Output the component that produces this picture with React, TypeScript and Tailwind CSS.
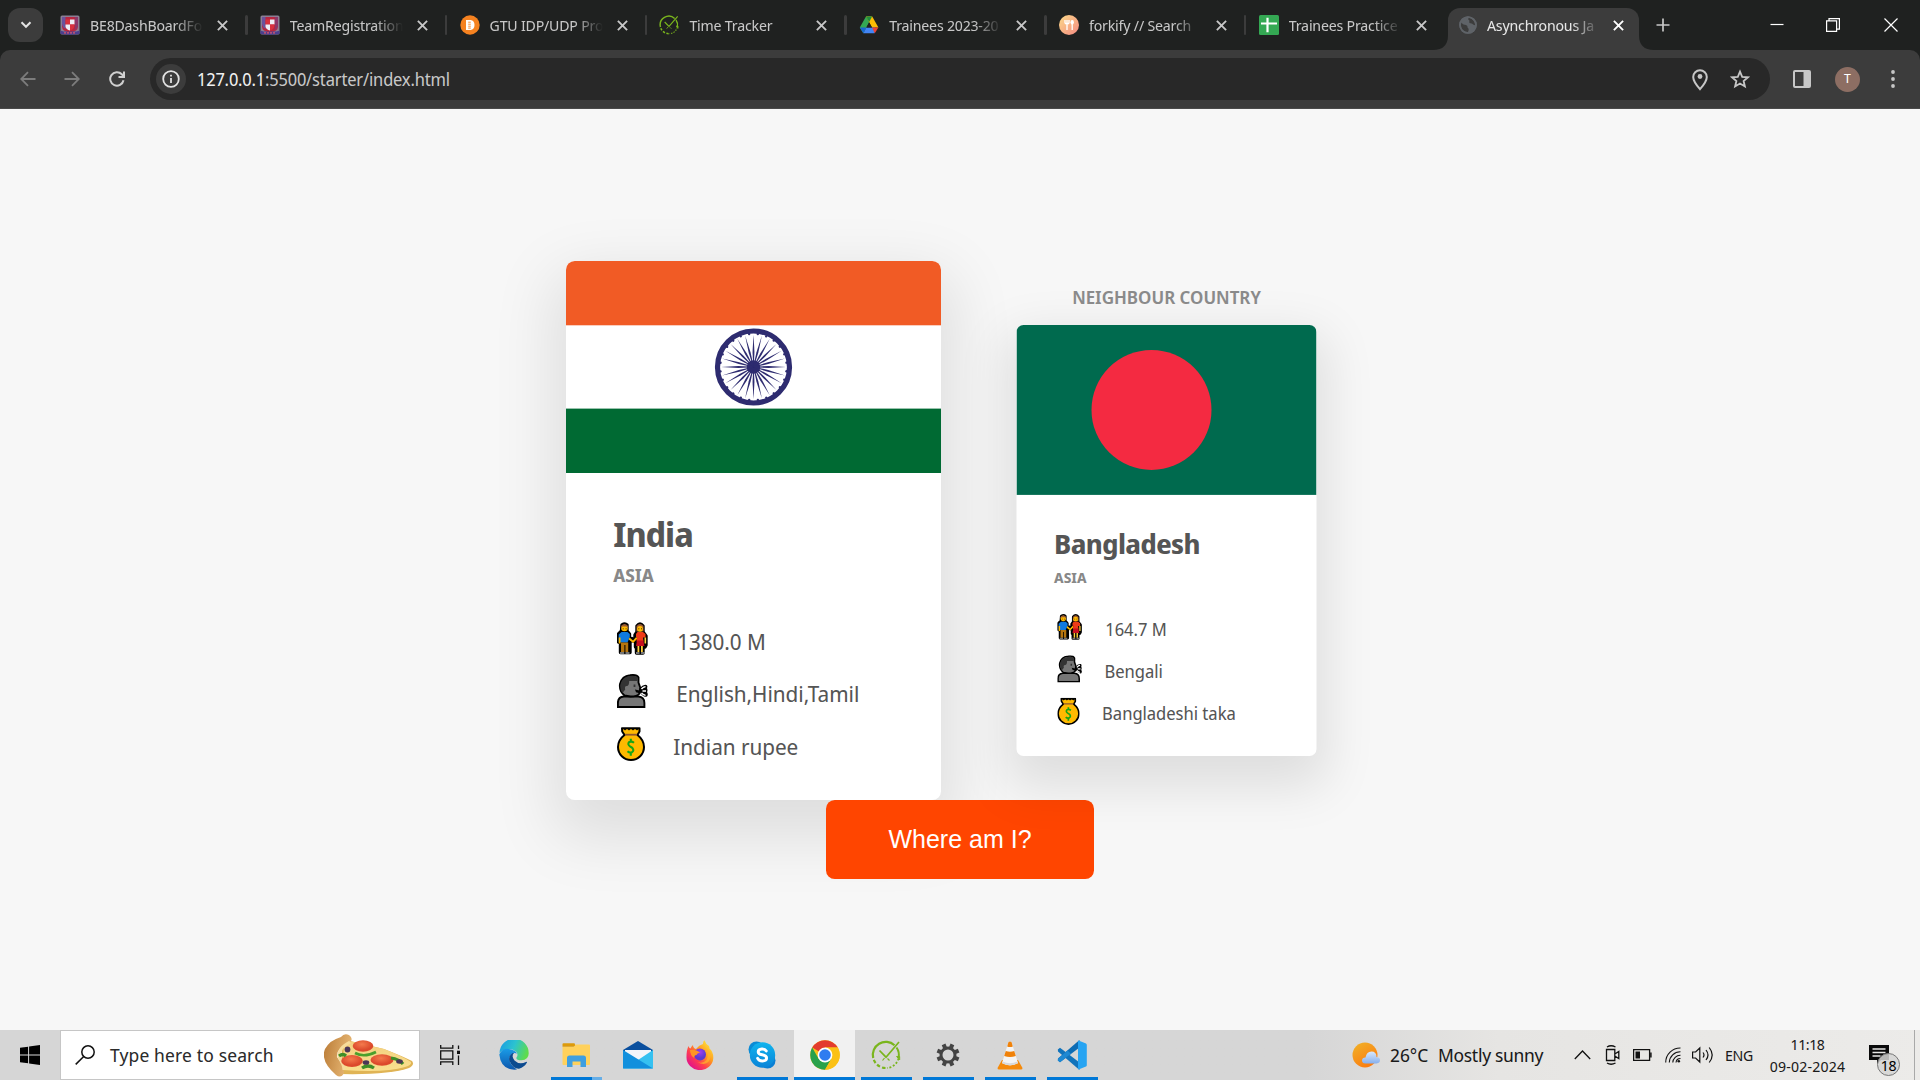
import type { ReactNode } from "react";

/* ---------- Favicons ---------- */

function CrestIcon() {
  return (
    <svg viewBox="0 0 20 20" className="size-5 shrink-0">
      <rect x="0.5" y="0.5" width="19" height="19" rx="1.5" fill="#8b7f93" />
      <path d="M2 2h16v9.500q0 4.500-8 6.500q-8-2-8-6.500z" fill="#b8263f" />
      <path d="M2 2h3.500v12l-2-1.500q-1.500-2-1.500-4z" fill="#5a5cae" opacity="0.85" />
      <path d="M14.800 2H18v9l-1.500 3l-1.700 1z" fill="#7e3c74" opacity="0.8" />
      <path d="M5.500 4.500h4.500v5h-4.500z" fill="#d8323f" />
      <path d="M10 4.500h4.500v5h-4.500z" fill="#eef0f6" />
      <path d="M5.500 9.500h4.500v6q-4-1-4.500-4z" fill="#eef0f6" />
      <path d="M10 9.500h4.500q0 5-4.500 6z" fill="#d8323f" />
      <path d="M0.500 15.500l3 1h13l3-1v3.500q-9.500 1.500-19 0z" fill="#4a3f8f" />
      <path d="M4 17.800h12" stroke="#d9566b" strokeWidth="1.200" strokeDasharray="2 1" />
    </svg>
  );
}

function GtuIcon() {
  return (
    <svg viewBox="0 0 20 20" className="size-5 shrink-0">
      <circle cx="10" cy="10" r="9.700" fill="#f58220" />
      <path d="M6 5h4.500q4 0.500 4 5t-4 5h-4.500z" fill="#fff" />
      <path d="M8.200 7.200h2.600M8.200 9.200h2.600M8.200 11.200h2.600M8.200 13.100h2.600" stroke="#f58220" strokeWidth="0.900" />
    </svg>
  );
}

function TrackerIcon({ className }: { className: string }) {
  return (
    <svg viewBox="0 0 30 30" className={className} fill="none" stroke="#7ab51d">
      <path d="M2.200 18A13 13 0 0 1 23.500 5.200" strokeWidth="2.200" />
      <path d="M25.500 7.500A13 13 0 0 1 27.500 18" strokeWidth="2" />
      <path d="M8.500 10.500L15 17.200L28 2" strokeWidth="1.700" />
      <path d="M16.500 18.500l2 2M13.500 18l-2 2.500" strokeWidth="1.200" />
      <path d="M27.500 18.500A13 13 0 0 1 16 28" strokeWidth="1.700" strokeDasharray="2 1.800" />
      <path d="M14.500 28A13 13 0 0 1 2.500 19" strokeWidth="2.200" strokeDasharray="3.500 2.200" />
      <path d="M25.500 16.500h3.200v3.500z" fill="#7ab51d" strokeWidth="0.800" />
    </svg>
  );
}

function DriveIcon() {
  return (
    <svg viewBox="0 0 20 20" className="size-5 shrink-0">
      <path d="M7 1.500L0.800 12.500L4.300 18.200L10.300 7.200z" fill="#34a853" />
      <path d="M7 1.500h6l-2.700 5.900z" fill="#188038" />
      <path d="M7 1.500h6.200L19.400 12.500h-6.400z" fill="#fbbc04" />
      <path d="M7 1.500h3.100l3 0l-2.900 5.600z" fill="#1e8e3e" />
      <path d="M4.300 18.200L7.300 12.500h8.800l-0.500 5.700z" fill="#4285f4" />
      <path d="M0.800 12.500h6.500l-3 5.700z" fill="#1967d2" />
      <path d="M13 12.500h6.400l-3.600 5.700z" fill="#ea4335" />
      <path d="M10.100 7.200L7.300 12.500h5.700z" fill="#1f2120" />
    </svg>
  );
}

function ForkifyIcon() {
  return (
    <svg viewBox="0 0 20 20" className="size-5 shrink-0">
      <defs>
        <linearGradient id="forkify" x1="0" y1="0" x2="1" y2="1">
          <stop offset="0" stopColor="#fbdb89" />
          <stop offset="1" stopColor="#f48982" />
        </linearGradient>
      </defs>
      <circle cx="10" cy="10" r="10" fill="url(#forkify)" />
      <path d="M6 5v3.500M8 5v3.500M10 5v3.500M6 8.500h4M8 9v6" stroke="#fff" strokeWidth="1.300" fill="none" />
      <ellipse cx="13.200" cy="7.200" rx="1.700" ry="2.300" fill="#fff" />
      <path d="M13.200 8v7" stroke="#fff" strokeWidth="1.300" />
    </svg>
  );
}

function SheetsIcon() {
  return (
    <svg viewBox="0 0 20 20" className="size-5 shrink-0">
      <rect width="20" height="20" rx="1.500" fill="#34a853" />
      <path d="M8.500 2.800v14.400M2 8.500h16" stroke="#fff" strokeWidth="2.200" />
    </svg>
  );
}

function GlobeIcon() {
  return (
    <svg viewBox="0 0 18 18" className="size-[18px] shrink-0">
      <circle cx="9" cy="9" r="8.800" fill="#5f6368" />
      <path d="M2 6.500q2.500 2.500 5 2.500q2 0.500 1.500 2.500q2 1 0.500 4.500q-6 0-7-6z" fill="#3c3c3c" />
      <path d="M9.500 1.800q-1 2 1 3q-1 1.500 0.500 2.500q2-0.500 3.500 1.500l1.500 0.500q0-6-6.500-7.500z" fill="#3c3c3c" />
      <circle cx="9" cy="9" r="8" fill="none" stroke="#5f6368" strokeWidth="1.600" />
    </svg>
  );
}

/* ---------- Browser chrome ---------- */

function CloseGlyph({ className }: { className: string }) {
  return (
    <svg viewBox="0 0 10 10" className={className} fill="none" stroke="currentColor" strokeWidth="1.700">
      <path d="M0.800 0.800l8.400 8.400M9.200 0.800L0.800 9.200" />
    </svg>
  );
}

const tabs: { title: string; icon: ReactNode }[] = [
  { title: "BE8DashBoardFo", icon: <CrestIcon /> },
  { title: "TeamRegistration", icon: <CrestIcon /> },
  { title: "GTU IDP/UDP Pro", icon: <GtuIcon /> },
  { title: "Time Tracker", icon: <TrackerIcon className="size-5 shrink-0" /> },
  { title: "Trainees 2023-20", icon: <DriveIcon /> },
  { title: "forkify // Search", icon: <ForkifyIcon /> },
  { title: "Trainees Practice", icon: <SheetsIcon /> },
];

const tabTitle =
  "ml-2.5 w-[113px] shrink-0 whitespace-nowrap text-[15px] leading-5 tracking-[-0.2px] [mask-image:linear-gradient(to_right,black_75%,transparent)]";

function TabStrip() {
  return (
    <div className="flex h-[50px] bg-[#1f2120] text-[#c7c7c7]">
      <div className="mt-2 ml-2 flex h-[34px] w-[35px] items-center justify-center rounded-xl bg-[#3c3c3c]">
        <svg viewBox="0 0 12 8" className="h-2 w-3" fill="none" stroke="#e3e3e3" strokeWidth="2">
          <path d="M1.500 1.200L6 5.800L10.500 1.200" />
        </svg>
      </div>
      <div className="ml-[7px] flex">
        {tabs.map((tab, i) => (
          <div key={i} className="flex w-[199.800px] items-center pl-2.5">
            {tab.icon}
            <span className={tabTitle}>{tab.title}</span>
            <CloseGlyph className="ml-3.5 size-[11px] shrink-0" />
            {i < tabs.length - 1 && <span className="ml-[17px] h-5 w-[2.500px] rounded bg-[#3c3c3c]" />}
          </div>
        ))}
        <div className="relative -ml-[0.600px] mt-2 flex h-[42px] w-[191px] items-center rounded-t-xl bg-[#3c3c3c] pb-2 pl-[11px] text-[#e6e6e6]">
          <svg viewBox="0 0 15 15" className="absolute bottom-0 -left-[15px] size-[15px]">
            <path d="M15 0v15H0Q15 15 15 0z" fill="#3c3c3c" />
          </svg>
          <svg viewBox="0 0 15 15" className="absolute -right-[15px] bottom-0 size-[15px]">
            <path d="M0 0v15h15Q0 15 0 0z" fill="#3c3c3c" />
          </svg>
          <GlobeIcon />
          <span className={tabTitle}>Asynchronous Ja</span>
          <CloseGlyph className="ml-[13px] size-[11px] shrink-0 text-white" />
        </div>
      </div>
      <svg viewBox="0 0 14 14" className="mt-[18px] ml-[17px] size-3.5" stroke="#c7c7c7" strokeWidth="1.700">
        <path d="M7 0.500v13M0.500 7h13" />
      </svg>
      <div className="ml-auto flex h-[50px] items-center pr-[22px]">
        <svg viewBox="0 0 14 14" className="size-3.5" stroke="#fff" strokeWidth="1.200">
          <path d="M0.500 6.500h13" />
        </svg>
        <svg viewBox="0 0 14 14" className="ml-[42px] size-3.5" fill="none" stroke="#fff" strokeWidth="1.200">
          <path d="M0.600 2.900h10v10.500h-10zM3 2.900V0.600h10.400v10.500h-2.500" />
        </svg>
        <svg viewBox="0 0 14 14" className="ml-[44px] size-3.5" stroke="#fff" strokeWidth="1.200">
          <path d="M0.500 0.500l13 13M13.500 0.500l-13 13" />
        </svg>
      </div>
    </div>
  );
}

function Toolbar() {
  return (
    <div className="bg-[#1f2120]">
      <div className="flex h-[59px] items-center rounded-t-[10px] border-b border-[#4a4a4a] bg-[#3c3c3c] pl-5">
        <svg viewBox="0 0 16 16" className="size-4" fill="none" stroke="#7c7c7c" strokeWidth="1.800">
          <path d="M15.500 8H1.500M8 1.200L1.200 8L8 14.800" />
        </svg>
        <svg viewBox="0 0 16 16" className="ml-[28px] size-4" fill="none" stroke="#7c7c7c" strokeWidth="1.800">
          <path d="M0.500 8h14M8 1.200L14.800 8L8 14.800" />
        </svg>
        <svg viewBox="0 0 16 16" className="ml-[29px] size-4" fill="none" stroke="#d0d0d0" strokeWidth="2">
          <path d="M14.500 9.200A6.700 6.700 0 1 1 12.800 3.300L14.500 5.200" />
          <path d="M15 0.500v5.500h-5.500" />
        </svg>
        <div className="ml-[25px] flex h-[42px] w-[1620px] items-center rounded-full bg-[#282828] pl-[6px]">
          <div className="flex size-[30px] items-center justify-center rounded-full bg-[#3c3c3c]">
            <svg viewBox="0 0 18 18" className="size-[18px]" fill="none" stroke="#e3e3e3" strokeWidth="1.800">
              <circle cx="9" cy="9" r="7.800" />
              <path d="M9 8v5M9 4.700v1.800" />
            </svg>
          </div>
          <span className="ml-[11px] text-[17.500px] leading-6 tracking-[-0.190px] text-[#c7c7c7]">
            <span className="text-[#f0f0f0]">127.0.0.1</span>:5500/starter/index.html
          </span>
          <svg viewBox="0 0 16 22" className="mt-0.5 ml-auto h-[22px] w-4" fill="none" stroke="#c7c7c7" strokeWidth="2">
            <path d="M8 20.200Q1.200 12.500 1.200 8A6.800 6.800 0 0 1 14.800 8Q14.800 12.500 8 20.200z" />
            <circle cx="8" cy="7.500" r="2.400" fill="#c7c7c7" stroke="none" />
          </svg>
          <svg viewBox="0 0 20 20" className="mr-5 ml-[22px] size-5" fill="none" stroke="#c7c7c7" strokeWidth="1.800">
            <path d="M10 2.600l2.200 5.200l5.700 0.500l-4.300 3.700l1.300 5.500L10 14.600l-4.900 2.900l1.300-5.500L2.100 8.300l5.700-0.500z" />
          </svg>
        </div>
        <svg viewBox="0 0 18 18" className="ml-[23px] size-[18px]">
          <rect x="1" y="1" width="16" height="16" rx="1" fill="none" stroke="#c7c7c7" strokeWidth="2" />
          <path d="M10.500 1H17v16h-6.500z" fill="#c7c7c7" />
        </svg>
        <div className="ml-[24px] flex size-[25px] items-center justify-center rounded-full bg-[#8d6e63] text-[13px] text-white">
          T
        </div>
        <svg viewBox="0 0 4 18" className="ml-[31px] h-[18px] w-1" fill="#c7c7c7">
          <circle cx="2" cy="2" r="1.900" />
          <circle cx="2" cy="9" r="1.900" />
          <circle cx="2" cy="16" r="1.900" />
        </svg>
      </div>
    </div>
  );
}

/* ---------- Flags ---------- */

const spokes = Array.from({ length: 24 }, (_, i) => i * 15);

function IndiaFlag() {
  return (
    <svg viewBox="0 0 375 212" className="block h-[212px] w-[375px]">
      <rect width="375" height="212" fill="#fff" />
      <rect width="375" height="64.300" fill="#f15b25" />
      <rect y="147.600" width="375" height="64.400" fill="#006a33" />
      <g transform="translate(187.500 106)" fill="#2e2c70">
        <circle r="36" fill="none" stroke="#2e2c70" strokeWidth="5.200" />
        <circle r="6.800" />
        {spokes.map((angle) => (
          <g key={angle} transform={`rotate(${angle})`}>
            <path d="M-0.250 0L-0.950 -15L0 -32.500L0.950 -15L0.250 0z" />
            <circle cx="4.300" cy="-33" r="1.200" />
          </g>
        ))}
      </g>
    </svg>
  );
}

function BangladeshFlag() {
  return (
    <svg viewBox="0 0 375 212.500" className="block h-[212.500px] w-[375px]">
      <rect width="375" height="212.500" fill="#006a4e" />
      <circle cx="168.750" cy="106.250" r="75" fill="#f42a41" />
    </svg>
  );
}

/* ---------- Country row pictograms ---------- */

function CoupleIcon() {
  return (
    <svg viewBox="0 0 31 34" className="h-[34px] w-[31px] shrink-0">
      <path
        d="M5 3q3-2 5 0v6l2.500 3v7l2.500-2.500L18 19v-6l2-3V4q3-4 6 0v6l3 4v9l-1 2h-2v6h-6.500v-6h-1v-5l-3-1.500l-2.500 1v11H3.500V21l-2-1v-8l3-3z"
        stroke="#000"
        strokeWidth="3.400"
        strokeLinejoin="round"
        fill="#000"
      />
      <path d="M4.500 10h6l2.300 2v3l-2.300 5.500h-6l-2.800-0.500v-7.500z" fill="#0f7ae0" />
      <path d="M1.700 15.500h1.800v6h-1.800zM12.500 15.500l3.500 3l3.200-3.500l1.300 1.500l-4.300 4.500l-4.500-3.500z" fill="#ffb900" />
      <path d="M4 20.500h7.200v9.500H8.400v-7h-1v7H4z" fill="#b5750f" />
      <path d="M3 30h4.200v2H3zM8.500 30h4v2h-4z" fill="#767676" />
      <circle cx="7.500" cy="6" r="3.300" fill="#ffb900" />
      <path d="M4 6V4Q7.500-0.200 11 4v2l-1.500-1.500h-4z" fill="#9a5a32" />
      <path d="M5.700 6.800h1M8.600 6.800h1" stroke="#000" strokeWidth="0.700" />
      <path d="M19.500 8V4q3.500-4 7 0v5.500h-7z" fill="#9a5a32" />
      <circle cx="23" cy="6.800" r="2.900" fill="#ffb900" />
      <path d="M21.300 6.800h1M24 6.800h1" stroke="#000" strokeWidth="0.700" />
      <path d="M20.500 10h5.500l2.500 2v3.500h-2.500l0.500 4h-7l0.500-4.500h-1v-3z" fill="#f03a17" />
      <path d="M20 18.500h6.300l1.200 5.500h-8.500z" fill="#c50f1f" />
      <path d="M27.500 15.500h1.600v6h-1.600zM20.500 24h1.800v6h-1.800zM24 24h1.800v6H24z" fill="#ffd03a" />
      <path d="M19 30h3.500v2H19zM24 30h4v2h-4z" fill="#767676" />
    </svg>
  );
}

function SpeakingIcon() {
  return (
    <svg viewBox="0 0 31 34" className="h-[34px] w-[31px] shrink-0">
      <path d="M0.900 33V29q0-6 6-6.500h14.500q6 0.500 6 6.500v4z" fill="#767676" stroke="#000" strokeWidth="1.900" />
      <path d="M7.500 21.500Q2 17 3 10Q5 2 13 1.200q7-1 8.500 2.300v5l1.700 5l-0.700 6q-2 3-9 3z" fill="#767676" stroke="#000" strokeWidth="1.900" />
      <path d="M5.500 19Q2.500 15 3.500 10Q5.500 3 12.500 2q6.500-0.800 8.200 1.500v3.500h-8.500q0 5-2.500 5t-1.500 3.500z" fill="#333" />
      <path d="M17.500 10.500v2.500" stroke="#333" strokeWidth="1.800" />
      <path d="M18 15.500l5.500 1.200l-1 2.500l-3.500-1z" fill="#000" />
      <path d="M22.500 14.500Q26 10 29.500 11q1.500 1 0.500 3q1 2.500 0 4q1.500 2.500 0 4.500q-4 1-7-4z" fill="#000" />
      <path d="M24.500 15q2-2.500 4-2.300M25.500 17h3.500M24.500 19q2 2.300 4 2.200" stroke="#fff" strokeWidth="1.500" fill="none" />
    </svg>
  );
}

function MoneyIcon() {
  return (
    <svg viewBox="0 0 28 34" className="h-[34px] w-7 shrink-0">
      <path
        d="M5 1.200h17.500v3.300l-2 3.500q6.500 5 6.500 12A12.700 12.700 0 1 1 1 20Q1 13 7.500 8L5.200 4.500z"
        fill="#ffb900"
        stroke="#000"
        strokeWidth="2"
        strokeLinejoin="round"
      />
      <path d="M8 7.700h12" stroke="#8e562e" strokeWidth="1.800" />
      <path d="M6 1.500l2 2l2-2l2 2l2-2l2 2l2-2l2 2l1.800-2z" fill="#000" />
      <path
        d="M17 15.800Q14.500 13.700 12 15.200Q10.300 17.500 13 19.300L15.300 20.800Q17.500 23.500 15 25.200Q12.500 26.200 10.500 24.300M13.800 11.800v3M13.800 25.500v3.200"
        stroke="#16a516"
        strokeWidth="2.100"
        fill="none"
      />
    </svg>
  );
}

/* ---------- Country card ---------- */

type Country = {
  flag: ReactNode;
  name: string;
  region: string;
  population: string;
  languages: string;
  currency: string;
};

function CountryRow({ icon, children }: { icon: ReactNode; children: ReactNode }) {
  return (
    <div className="flex h-[52.500px] items-center">
      <div className="-mt-[4px]">{icon}</div>
      <span className="whitespace-nowrap text-[22px] leading-8 tracking-[-0.050px]">{children}</span>
    </div>
  );
}

function CountryCard({ country, neighbour = false }: { country: Country; neighbour?: boolean }) {
  return (
    <article
      className={
        neighbour
          ? "relative ml-[37.500px] w-[375px] translate-y-[10px] scale-80 rounded-[8.750px] bg-white shadow-[0_25px_62.500px_12.500px_rgba(0,0,0,0.1)]"
          : "w-[375px] rounded-[8.750px] bg-white shadow-[0_25px_62.500px_12.500px_rgba(0,0,0,0.1)]"
      }
    >
      {neighbour && (
        <h2 className="absolute -top-[49px] w-full text-center text-[22.500px] leading-[30px] font-semibold text-[#8a8a8a]">
          NEIGHBOUR COUNTRY
        </h2>
      )}
      <div className="overflow-hidden rounded-t-[8.750px]">{country.flag}</div>
      <div className={neighbour ? "h-[326.500px] pt-[38px] pl-[47px] text-[#555]" : "h-[327px] pt-[38.500px] pl-[47px] text-[#555]"}>
        <h3 className={neighbour ? "text-[34px] leading-[44px] font-bold tracking-[-0.750px]" : "text-[34px] leading-[44px] font-bold tracking-[-1px]"}>
          {country.name}
        </h3>
        <h4 className={neighbour ? "mt-[8px] text-[18px] leading-6 font-bold text-[#888]" : "mt-[7px] text-[18px] leading-6 font-bold text-[#888]"}>
          {country.region}
        </h4>
        <div className={neighbour ? "mt-[27px] pl-1" : "mt-[28px] pl-1"}>
          <CountryRow icon={<div className="w-[60px]"><CoupleIcon /></div>}>{country.population}</CountryRow>
          <CountryRow icon={<div className="w-[59px]"><SpeakingIcon /></div>}>{country.languages}</CountryRow>
          <CountryRow icon={<div className="w-[56px]"><MoneyIcon /></div>}>{country.currency}</CountryRow>
        </div>
      </div>
    </article>
  );
}

const india: Country = {
  flag: <IndiaFlag />,
  name: "India",
  region: "ASIA",
  population: "1380.0 M",
  languages: "English,Hindi,Tamil",
  currency: "Indian rupee",
};

const bangladesh: Country = {
  flag: <BangladeshFlag />,
  name: "Bangladesh",
  region: "ASIA",
  population: "164.7 M",
  languages: "Bengali",
  currency: "Bangladeshi taka",
};

/* ---------- Taskbar icons ---------- */

function PizzaIcon() {
  return (
    <svg viewBox="0 0 90 43" className="h-[43px] w-[90px]">
      <defs>
        <linearGradient id="crust" x1="0" y1="0" x2="1" y2="0.300">
          <stop offset="0" stopColor="#b97a35" />
          <stop offset="1" stopColor="#e6b673" />
        </linearGradient>
        <linearGradient id="cheese" x1="0" y1="0" x2="0" y2="1">
          <stop offset="0" stopColor="#f3cf7e" />
          <stop offset="1" stopColor="#f9e08e" />
        </linearGradient>
        <radialGradient id="pepperoni" cx="0.450" cy="0.350">
          <stop offset="0" stopColor="#f47a4c" />
          <stop offset="1" stopColor="#dc4a2c" />
        </radialGradient>
      </defs>
      <path d="M18 5L60 15Q78 22 88 27q3 4-3 7q-20 7-68 6z" fill="#e0b455" />
      <path d="M20 6L60 15Q80 23 87 28q1 3-6 5q-20 6-62 3z" fill="url(#cheese)" />
      <path d="M17 3q3-4 8-2q4 3 2 6Q12 14 13 23q6 8 7 16q-3 6-8 2Q-4 27 1 15q5-9 16-12z" fill="url(#crust)" />
      <path d="M26 8Q14 14 15 23q5 8 5 13" fill="none" stroke="#f6dc9b" strokeWidth="3" />
      <ellipse cx="39" cy="12" rx="10.300" ry="5.800" fill="url(#pepperoni)" />
      <ellipse cx="28" cy="27" rx="10.800" ry="6" fill="url(#pepperoni)" />
      <ellipse cx="58" cy="26" rx="11.500" ry="5.800" fill="url(#pepperoni)" />
      <path d="M31 19q9 5 21-1" stroke="#4ba02c" strokeWidth="2.600" fill="none" />
      <path d="M38 34q6-4 12 0M15 22q4-3 7 0M67 24q8 1 12 6" stroke="#3f8f28" strokeWidth="3.200" fill="none" />
      <circle cx="23.500" cy="15.500" r="2.900" fill="#4b3657" />
      <ellipse cx="42" cy="28.500" rx="3.300" ry="2.300" fill="#4b3657" />
      <ellipse cx="75.500" cy="27.500" rx="3.300" ry="2.200" fill="#4b3657" />
    </svg>
  );
}

function EdgeIcon() {
  return (
    <svg viewBox="0 0 30 30" className="size-[30px]">
      <defs>
        <linearGradient id="edgeTop" x1="0" y1="0.200" x2="1" y2="0.500">
          <stop offset="0" stopColor="#1b9de2" />
          <stop offset="0.500" stopColor="#2cc3d0" />
          <stop offset="1" stopColor="#5fdc4a" />
        </linearGradient>
        <linearGradient id="edgeLeft" x1="0" y1="0" x2="0" y2="1">
          <stop offset="0" stopColor="#1a9be6" />
          <stop offset="1" stopColor="#0d57ad" />
        </linearGradient>
      </defs>
      <path d="M0.500 13A14.600 14.600 0 0 1 29.700 13.500Q29.500 20 22.500 20.300Q16.500 20 17.500 17.500Q19.500 15 17.500 12Q13 7.500 6 9.500Q2 10.500 0.500 13z" fill="url(#edgeTop)" />
      <path d="M0.300 14.500Q3 8 10 9Q16.500 10 18 13.500Q12 11.500 10.500 17.500Q10 25 18 29.500Q2 31 0.300 14.500z" fill="url(#edgeLeft)" />
      <path d="M13.500 13Q9 16 10.500 21Q14 29 20 28.800Q25.500 27 28 22.500Q28 21.500 27 22Q20 25 15.500 20.500Q12 16 15 13z" fill="#0c4a8f" />
    </svg>
  );
}

function ExplorerIcon() {
  return (
    <svg viewBox="0 0 28 24" className="h-6 w-7">
      <path d="M0.500 1q0-0.800 1-0.800h11l1.500 3.500H0.500z" fill="#dd9a0a" />
      <path d="M0.500 4h11l2.500-2.500h13q1 0 1 1V21q0 1-1 1H1.500q-1 0-1-1z" fill="#ffd15c" />
      <path d="M5 24V15q0-2.500 2.500-2.500h14q2.500 0 2.500 2.500v9h-5.500v-5.500h-8V24z" fill="#3f9fe0" />
    </svg>
  );
}

function MailIcon() {
  return (
    <svg viewBox="0 0 30 28" className="h-7 w-[30px]">
      <path d="M0 9L15 0l15 9v3H0z" fill="#0a4f9e" />
      <path d="M2 9h26v14H2z" fill="#f3f6fa" />
      <path d="M30 9v18.500H0L15 19z" fill="#35c1f1" />
      <path d="M0 9l30 18.500H0z" fill="#1290dd" />
    </svg>
  );
}

function FirefoxIcon() {
  return (
    <svg viewBox="0 0 30 30" className="size-[30px]">
      <defs>
        <linearGradient id="fox" x1="0.900" y1="0.100" x2="0.200" y2="0.900">
          <stop offset="0" stopColor="#ffe83d" />
          <stop offset="0.400" stopColor="#ff9a1f" />
          <stop offset="0.700" stopColor="#ff3d50" />
          <stop offset="1" stopColor="#e31587" />
        </linearGradient>
        <radialGradient id="foxGlobe" cx="0.500" cy="0.300">
          <stop offset="0" stopColor="#a13ef0" />
          <stop offset="1" stopColor="#5b3bd0" />
        </radialGradient>
      </defs>
      <path d="M3.500 6q0.500 2 2 2.500Q6.500 6 8 5q0 3 3 4Q14 5 18 4Q18 1 19.500 0.300Q20.500 4 24 6Q24.500 7 24.500 8.500Q28.500 12 28.300 18A13.300 12.500 0 0 1 1.500 17Q1.500 10 3.500 6z" fill="url(#fox)" />
      <circle cx="15" cy="14.500" r="6" fill="url(#foxGlobe)" />
      <path d="M5 10Q11 9 15 12.500Q12 13 11.500 15Q9 15 9.200 18Q5 15 5 10z" fill="#ff9524" />
      <path d="M18.500 8Q25 13 21.500 20Q18 24 12 22Q24 28 26 15Q25 10 18.500 8z" fill="#ffb32c" opacity="0.700" />
    </svg>
  );
}

function SkypeIcon() {
  return (
    <svg viewBox="0 0 28 28" className="size-7">
      <defs>
        <linearGradient id="skype" x1="0" y1="0" x2="0" y2="1">
          <stop offset="0" stopColor="#10b4ee" />
          <stop offset="1" stopColor="#0a84d8" />
        </linearGradient>
      </defs>
      <circle cx="8.500" cy="8.500" r="8" fill="#0a8bd6" />
      <circle cx="19.500" cy="19.500" r="8" fill="#0a7fd4" />
      <circle cx="14.500" cy="14" r="12.700" fill="url(#skype)" />
      <path d="M18.300 10Q17 7.800 13.800 8q-3.600 0.300-3.600 2.900q0 2.200 4 2.900q4.400 0.800 4.400 3.200q0 2.900-4.200 3q-3.700 0-4.800-2.700" fill="none" stroke="#fff" strokeWidth="2.900" strokeLinecap="round" />
    </svg>
  );
}

function ChromeIcon() {
  return (
    <svg viewBox="0 0 30 30" className="size-[30px]">
      <circle cx="15" cy="15" r="14.800" fill="#fbc116" />
      <path d="M15 15L2.200 7.600A14.800 14.800 0 0 1 27.800 7.600H15z" fill="#e33b2e" />
      <path d="M2.200 7.600A14.800 14.800 0 0 0 15 29.800L21.400 18.700L8.600 18.700z" fill="#2aa14b" />
      <path d="M15 7.600h12.800A14.800 14.800 0 0 1 15 29.800l6.400-11.100z" fill="#fbc116" />
      <circle cx="15" cy="15" r="7.400" fill="#fff" />
      <circle cx="15" cy="15" r="5.800" fill="#2f7cf0" />
    </svg>
  );
}

const teeth = Array.from({ length: 8 }, (_, i) => i * 45 + 22.5);

function GearIcon() {
  return (
    <svg viewBox="0 0 24 24" className="size-6">
      <circle cx="12" cy="12" r="7" fill="none" stroke="#444" strokeWidth="3" />
      {teeth.map((angle) => (
        <rect key={angle} x="10" y="0.500" width="4" height="4.500" fill="#444" transform={`rotate(${angle} 12 12)`} />
      ))}
    </svg>
  );
}

function VlcIcon() {
  return (
    <svg viewBox="0 0 26 29" className="h-[29px] w-[26px]">
      <path d="M5 19h16l4.500 8q0 1.500-1.500 1.500H2Q0.500 28.500 0.500 27z" fill="#f58a0b" />
      <path d="M11.500 1q1.500-1 3 0l6.500 21q-8 4.500-16 0z" fill="#f4f4f4" />
      <path d="M11.500 1q1.500-1 3 0l1.300 4.500q-2.800 1-5.600 0zM8.800 10q4.200 1.500 8.400 0l1.600 5q-5.800 2-11.600 0z" fill="#f0820a" />
      <path d="M5.500 20.500q7.500 3.500 15 0l0.500 1.800q-8 4.200-16 0z" fill="#d9d9d9" />
    </svg>
  );
}

function CodeIcon() {
  return (
    <svg viewBox="0 0 30 30" className="size-[30px]">
      <path d="M0.800 9.500L3 7.800L22.500 22.500V30L1 11.500z" fill="#1173bb" />
      <path d="M0.800 20.500L3 22.200L22.500 7.500V0L1 18.500z" fill="#0d6cb4" />
      <path d="M0.800 20.500L3 22.200L14 13.800L10.500 10.500L1 18.500z" fill="#1e88d2" />
      <path d="M21.500 0.500L29 3.500q0.800 0.500 0.800 1.500v20q0 1-0.800 1.500l-7.500 3q-0.500-0.500-0.500-2V2.500q0-1.500 0.500-2z" fill="#27a4f2" />
    </svg>
  );
}

type TaskbarApp = { icon: ReactNode; bar: "none" | "bar" | "multi"; active?: boolean };

const apps: TaskbarApp[] = [
  { icon: <EdgeIcon />, bar: "none" },
  { icon: <ExplorerIcon />, bar: "multi" },
  { icon: <MailIcon />, bar: "none" },
  { icon: <FirefoxIcon />, bar: "none" },
  { icon: <SkypeIcon />, bar: "bar" },
  { icon: <ChromeIcon />, bar: "bar", active: true },
  { icon: <TrackerIcon className="size-[30px]" />, bar: "bar" },
  { icon: <GearIcon />, bar: "bar" },
  { icon: <VlcIcon />, bar: "bar" },
  { icon: <CodeIcon />, bar: "bar" },
];

function Tray() {
  return (
    <div className="ml-auto flex h-full w-[568px] shrink-0 items-center text-[15px] leading-[22px] text-[#1a1a1a]">
      <svg viewBox="0 0 28 26" className="h-[26px] w-7 shrink-0">
        <defs>
          <linearGradient id="sun" x1="0" y1="0" x2="0.600" y2="1">
            <stop offset="0" stopColor="#f0b429" />
            <stop offset="1" stopColor="#fb7c10" />
          </linearGradient>
          <linearGradient id="cloud" x1="0" y1="0" x2="0" y2="1">
            <stop offset="0" stopColor="#d9e8fb" />
            <stop offset="1" stopColor="#86b0ee" />
          </linearGradient>
        </defs>
        <circle cx="13" cy="13" r="12.500" fill="url(#sun)" />
        <path d="M13.500 21.500q-3.500 0-3.500-3t3.500-3q1-6 6-6t5 5.500q3.500 0.500 3.500 3.300t-3.500 3.200z" fill="url(#cloud)" />
      </svg>
      <span className="ml-[10px] w-12 shrink-0 text-[18.500px]">26°C</span>
      <span className="w-[136px] shrink-0 whitespace-nowrap text-[18.500px] tracking-[-0.300px]">Mostly sunny</span>
      <svg viewBox="0 0 17 10" className="h-2.5 w-[17px] shrink-0" fill="none" stroke="#111" strokeWidth="1.300">
        <path d="M0.800 9L8.500 1L16.200 9" />
      </svg>
      <svg viewBox="0 0 16 20" className="ml-[14px] h-5 w-4 shrink-0" fill="none" stroke="#111" strokeWidth="1.300">
        <path d="M1.500 4.500h8.300v11H1.500zM9.800 9l4-2.500v7l-4-2.500M2 2Q6 -0.500 10.500 2M2 18q4 2.500 8.500 0" />
      </svg>
      <svg viewBox="0 0 19 12" className="ml-3 h-3 w-[19px] shrink-0" fill="none" stroke="#111" strokeWidth="1.300">
        <path d="M0.600 0.600h16v10.800h-16zM18 3.500v5" />
        <path d="M2.500 2.500H7v7H2.500z" fill="#111" stroke="none" />
      </svg>
      <svg viewBox="0 0 16 16" className="ml-[13px] size-4 shrink-0" fill="none" stroke="#111" strokeWidth="1.100">
        <path d="M0.700 15.500A14.500 14.500 0 0 1 15.500 1M4.300 15.500A11 11 0 0 1 15.500 4.700M7.800 15.500A7.500 7.500 0 0 1 15.500 8.300M11 15.500A4.500 4.500 0 0 1 15.500 11.500" />
        <circle cx="13.800" cy="14.200" r="1.300" fill="#111" stroke="none" />
      </svg>
      <svg viewBox="0 0 22 18" className="ml-[11px] h-[18px] w-[22px] shrink-0" fill="none" stroke="#111" strokeWidth="1.200">
        <path d="M0.600 6h3l4.200-4v14l-4.200-4h-3zM11 6.500q2 2.500 0 5M14 4q4 5 0 10M17.200 1.500q6 7.500 0 15" />
      </svg>
      <span className="ml-[11px] w-[38px] shrink-0 tracking-[-0.300px]">ENG</span>
      <div className="w-[89px] shrink-0 text-center">
        <div className="tracking-[-0.400px]">11:18</div>
        <div className="tracking-[0.200px]">09-02-2024</div>
      </div>
      <div className="relative ml-[17px] h-[50px] w-[46px] shrink-0 border-r border-[#a9a9a9]">
        <svg viewBox="0 0 20 20" className="mt-[14px] size-5">
          <path d="M0 1h20v15h-8l-4 4v-4H0z" fill="#0a0a0a" />
          <path d="M3.500 5h13M3.500 8.500h13M3.500 12h8" stroke="#e8e8e6" strokeWidth="1.300" />
        </svg>
        <div className="absolute top-[23px] left-2 flex size-[23px] items-center justify-center rounded-full border border-[#777] bg-[#d5d5d3]/85 text-[15px] tracking-[-0.300px] text-black">
          18
        </div>
      </div>
    </div>
  );
}

function Taskbar() {
  return (
    <footer className="flex h-[50px] items-center bg-linear-to-r from-[#d6d6d6] from-68% via-[#e6e5e3] via-78% to-[#ecebe9]">
      <div className="flex w-[60px] justify-center">
        <svg viewBox="0 0 20 20" className="size-5">
          <path d="M0 2.800L8.100 1.700v7.800H0zM9.100 1.500L20 0v9.500H9.100zM0 10.500h8.100v7.800L0 17.200zM9.100 10.500H20V20L9.100 18.500z" />
        </svg>
      </div>
      <div className="flex h-[50px] w-[360px] items-center border border-[#c6c6c6] bg-white pl-3.5">
        <svg viewBox="0 0 20 20" className="size-5" fill="none" stroke="#111" strokeWidth="1.500">
          <circle cx="13" cy="7" r="6.200" />
          <path d="M8.700 11.500L0.700 19.400" />
        </svg>
        <span className="ml-[15px] text-[18.500px] leading-6 tracking-[0.150px] text-[#2b2b2b]">Type here to search</span>
        <div className="mr-[5px] ml-auto">
          <PizzaIcon />
        </div>
      </div>
      <div className="flex w-[63px] justify-center pr-[3px]">
        <svg viewBox="0 0 20 20" className="size-5" fill="none" stroke="#111" strokeWidth="1.300">
          <path d="M0.700 0v3.200h12.100V0M0.700 5.800h12.100v8.400H0.700zM0.700 20v-3.200h12.100V20M18.500 0.500v3.500M18.500 10.500V20" />
          <path d="M17 5.700h3v3.300h-3z" fill="#111" stroke="none" />
        </svg>
      </div>
      {apps.map((app, i) => (
        <div
          key={i}
          className={
            app.active
              ? "ml-px flex h-[50px] w-[61px] flex-col items-center bg-[#f1f1f1]"
              : "flex h-[50px] w-[62px] flex-col items-center"
          }
        >
          <div className="flex h-[47px] items-center pt-[3px]">{app.icon}</div>
          {app.bar === "bar" && <div className={app.active ? "h-[3px] w-full bg-[#0078d7]" : "h-[3px] w-[51px] bg-[#0078d7]"} />}
          {app.bar === "multi" && (
            <div className="flex">
              <div className="h-[3px] w-[41px] bg-[#0078d7]" />
              <div className="h-[3px] w-2.5 bg-[#66aee7]" />
            </div>
          )}
        </div>
      ))}
      <Tray />
    </footer>
  );
}

export default function App() {
  return (
    <div className="flex h-[1080px] w-[1920px] flex-col overflow-hidden font-['Noto_Sans_Display','Noto_Sans','Open_Sans',sans-serif]">
      <TabStrip />
      <Toolbar />
      <main className="flex flex-1 flex-col items-center bg-[#f7f7f7] pt-[152px]">
        <div className="flex">
          <CountryCard country={india} />
          <CountryCard country={bangladesh} neighbour />
        </div>
        <button className="h-[79px] w-[268px] shrink-0 rounded-[8.750px] bg-[#ff4500] font-['Liberation_Sans',Arial,sans-serif] text-[25px] text-white">
          Where am I?
        </button>
      </main>
      <Taskbar />
    </div>
  );
}
